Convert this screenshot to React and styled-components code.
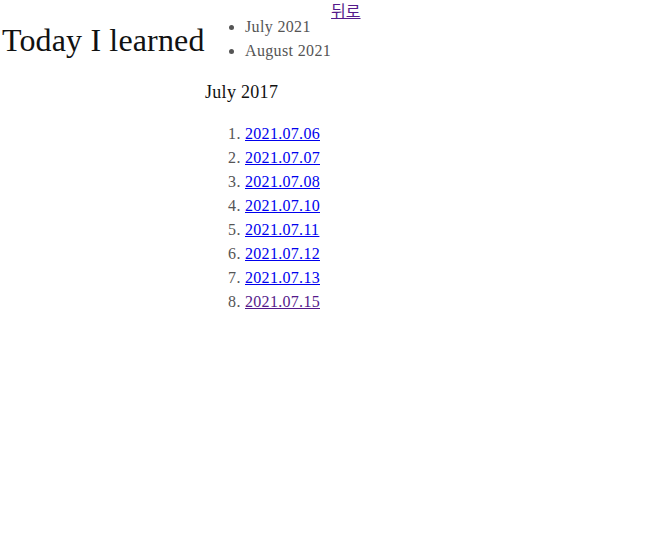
import React from "react";
import styled, { createGlobalStyle } from "styled-components";

const GlobalStyle = createGlobalStyle`
  body {
    margin: 0;
    background: #fff;
    font-family: "Liberation Serif", "Noto Sans CJK KR", serif;
    font-size: 16px;
  }
`;

const Header = styled.header`
  display: flex;
  align-items: flex-start;
`;

const Title = styled.h1`
  flex-shrink: 0;
  width: 203px;
  margin: 22px 0 0 2px;
  font-size: 32px;
  font-weight: normal;
  letter-spacing: 0.15px;
  white-space: nowrap;
  color: #111;
`;

const MonthList = styled.ul`
  margin: 15px 0 0;
  padding-left: 40px;
  color: #555;
  line-height: 24px;
  letter-spacing: 0.35px;
`;

const BackLink = styled.a`
  font-family: "Noto Sans CJK KR", sans-serif;
  font-size: 16px;
  line-height: 20px;
  color: #551a8b;
`;

const Main = styled.main`
  padding-left: 205px;
`;

const MonthTitle = styled.h3`
  margin: 19px 0 0;
  font-size: 18px;
  font-weight: normal;
  letter-spacing: 0.3px;
  color: #111;
`;

const DayList = styled.ol`
  margin: 19px 0 0;
  padding-left: 40px;
  color: #555;
  line-height: 24px;
  letter-spacing: 0.3px;
`;

const DayLink = styled.a`
  color: ${(p) => (p.$visited ? "#551a8b" : "#0000ee")};
`;

const days = [
  "2021.07.06",
  "2021.07.07",
  "2021.07.08",
  "2021.07.10",
  "2021.07.11",
  "2021.07.12",
  "2021.07.13",
  "2021.07.15",
];

export default function App() {
  return (
    <>
      <GlobalStyle />
      <Header>
        <Title>Today I learned</Title>
        <MonthList>
          <li>July 2021</li>
          <li>August 2021</li>
        </MonthList>
        <BackLink href="#">뒤로</BackLink>
      </Header>
      <Main>
        <MonthTitle>July 2017</MonthTitle>
        <DayList>
          {days.map((d, i) => (
            <li key={d}>
              <DayLink href="#" $visited={i === days.length - 1}>
                {d}
              </DayLink>
            </li>
          ))}
        </DayList>
      </Main>
    </>
  );
}
